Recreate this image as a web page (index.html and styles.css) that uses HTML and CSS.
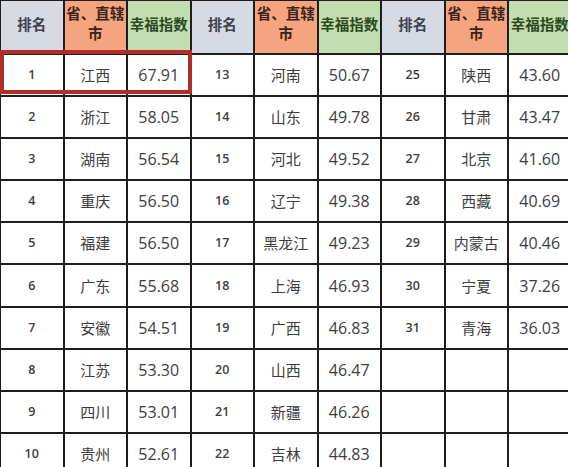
FILE: index.html
```html
<!DOCTYPE html>
<html lang="zh-CN">
<head>
<meta charset="utf-8">
<title>幸福指数排名</title>
<link rel="stylesheet" href="styles.css">
</head>
<body>
<div class="sheet">
<table class="rank-table">
  <colgroup>
    <col class="c"><col class="c"><col class="c"><col class="c"><col class="c"><col class="c"><col class="c"><col class="c"><col class="c">
  </colgroup>
  <thead>
    <tr>
      <th class="h-rank">排名</th><th class="h-prov">省、直辖<br>市</th><th class="h-idx">幸福指数</th>
      <th class="h-rank">排名</th><th class="h-prov">省、直辖<br>市</th><th class="h-idx">幸福指数</th>
      <th class="h-rank">排名</th><th class="h-prov">省、直辖<br>市</th><th class="h-idx">幸福指数</th>
    </tr>
  </thead>
  <tbody>
    <tr><td class="rank">1</td><td class="prov">江西</td><td class="num">67.91</td><td class="rank">13</td><td class="prov">河南</td><td class="num">50.67</td><td class="rank">25</td><td class="prov">陕西</td><td class="num">43.60</td></tr>
    <tr><td class="rank">2</td><td class="prov">浙江</td><td class="num">58.05</td><td class="rank">14</td><td class="prov">山东</td><td class="num">49.78</td><td class="rank">26</td><td class="prov">甘肃</td><td class="num">43.47</td></tr>
    <tr><td class="rank">3</td><td class="prov">湖南</td><td class="num">56.54</td><td class="rank">15</td><td class="prov">河北</td><td class="num">49.52</td><td class="rank">27</td><td class="prov">北京</td><td class="num">41.60</td></tr>
    <tr><td class="rank">4</td><td class="prov">重庆</td><td class="num">56.50</td><td class="rank">16</td><td class="prov">辽宁</td><td class="num">49.38</td><td class="rank">28</td><td class="prov">西藏</td><td class="num">40.69</td></tr>
    <tr><td class="rank">5</td><td class="prov">福建</td><td class="num">56.50</td><td class="rank">17</td><td class="prov">黑龙江</td><td class="num">49.23</td><td class="rank">29</td><td class="prov">内蒙古</td><td class="num">40.46</td></tr>
    <tr><td class="rank">6</td><td class="prov">广东</td><td class="num">55.68</td><td class="rank">18</td><td class="prov">上海</td><td class="num">46.93</td><td class="rank">30</td><td class="prov">宁夏</td><td class="num">37.26</td></tr>
    <tr><td class="rank">7</td><td class="prov">安徽</td><td class="num">54.51</td><td class="rank">19</td><td class="prov">广西</td><td class="num">46.83</td><td class="rank">31</td><td class="prov">青海</td><td class="num">36.03</td></tr>
    <tr><td class="rank">8</td><td class="prov">江苏</td><td class="num">53.30</td><td class="rank">20</td><td class="prov">山西</td><td class="num">46.47</td><td></td><td></td><td></td></tr>
    <tr><td class="rank">9</td><td class="prov">四川</td><td class="num">53.01</td><td class="rank">21</td><td class="prov">新疆</td><td class="num">46.26</td><td></td><td></td><td></td></tr>
    <tr><td class="rank">10</td><td class="prov">贵州</td><td class="num">52.61</td><td class="rank">22</td><td class="prov">吉林</td><td class="num faded">44.83</td><td></td><td></td><td></td></tr>
  </tbody>
</table>
<div class="highlight"></div>
</div>
</body>
</html>
```

FILE: styles.css
```css
html, body {
  margin: 0;
  padding: 0;
  background: #ffffff;
  overflow: hidden;
}

.sheet {
  position: relative;
  width: 568px;
  height: 467px;
  overflow: hidden;
}

.rank-table {
  border-collapse: collapse;
  table-layout: fixed;
  width: 572px;
  margin-left: -1px;
  margin-top: -1px;
  font-family: "Noto Sans CJK SC", "Noto Sans", sans-serif;
}

.rank-table col.c {
  width: 63.5px;
}

.rank-table th,
.rank-table td {
  box-sizing: border-box;
  border: 2px solid #1e1e1e;
  padding: 0;
  text-align: center;
  vertical-align: middle;
}

.rank-table th {
  height: 54px;
  font-size: 14.5px;
  font-weight: 700;
  line-height: 20px;
}

.rank-table th.h-rank {
  background: #d6dae2;
  color: #3c4150;
  padding-bottom: 6px;
}

.rank-table th.h-prov {
  background: #f4a47e;
  color: #3a2418;
  vertical-align: top;
  padding-top: 2px;
}

.rank-table th.h-idx {
  background: #c4ddb0;
  color: #2b4a22;
  padding-bottom: 7px;
}

.rank-table td {
  height: 42.1px;
  color: #3d3d3d;
  line-height: 18px;
}

.rank {
  font-family: "Open Sans", "Noto Sans", sans-serif;
  font-size: 12.5px;
  font-weight: 600;
}

.prov {
  font-size: 15px;
  font-weight: 400;
}

.num {
  font-family: "Open Sans", "Noto Sans", sans-serif;
  font-size: 16px;
  font-weight: 400;
}

.faded {
  color: #6e6e6e;
}

.highlight {
  position: absolute;
  left: 0;
  top: 50px;
  width: 184px;
  height: 36px;
  border: 4px solid #b12d27;
}
```
